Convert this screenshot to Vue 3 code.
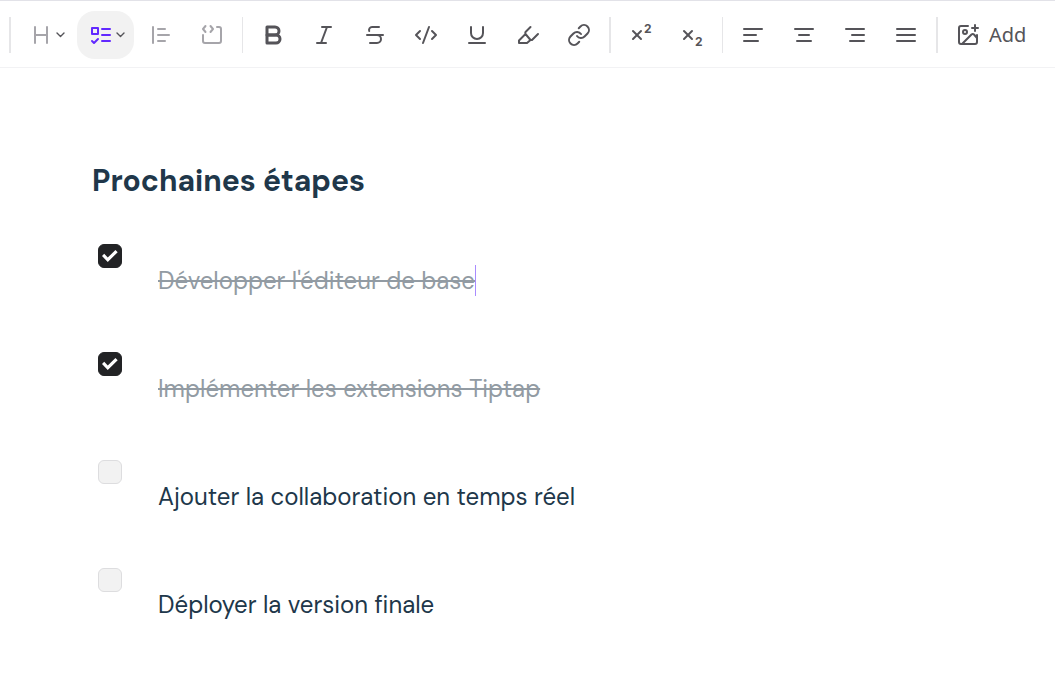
<template>
  <div class="editor">
    <!-- Barre d'outils -->
    <div class="toolbar" role="toolbar" aria-label="Mise en forme">
      <template v-for="(group, g) in groups" :key="g">
        <span class="separator" :class="{ wide: g % 2 === 0 }"></span>
        <div class="group">
          <button
            v-for="tool in group"
            :key="tool.name"
            type="button"
            class="tool"
            :class="{ menu: tool.menu, active: tool.active, disabled: tool.disabled, add: tool.text }"
            :aria-label="tool.name"
          >
            <svg class="icon" viewBox="0 0 24 24" :stroke-width="tool.stroke || 2">
              <path v-for="d in tool.paths" :key="d" :d="d" />
              <text v-if="tool.digitY" class="digit" x="15" :y="tool.digitY">2</text>
            </svg>
            <svg v-if="tool.menu" class="chevron" viewBox="0 0 12 12">
              <path d="M2 4l3.5 3.5L9 4" />
            </svg>
            <span v-if="tool.text" class="tool-text">{{ tool.text }}</span>
          </button>
        </div>
      </template>
    </div>

    <!-- Contenu du document -->
    <main class="content">
      <h2>Prochaines étapes</h2>
      <ul class="tasks">
        <li v-for="(task, i) in tasks" :key="task.label">
          <input :id="'task-' + i" v-model="task.done" type="checkbox" />
          <label :for="'task-' + i" :class="{ done: task.done, caret: i === 0 }">{{ task.label }}</label>
        </li>
      </ul>
    </main>
  </div>
</template>

<script setup>
import { ref } from 'vue'

const groups = [
  [
    { name: 'Titre', menu: true, disabled: true, paths: ['M6 4v16', 'M18 4v16', 'M6 12h12'] },
    { name: 'Liste', menu: true, active: true, paths: ['M3 5h6v6H3z', 'M3 18l2 2 4-4', 'M13 6h8', 'M13 12h8', 'M13 18h8'] },
    { name: 'Citation', disabled: true, paths: ['M4 4v16', 'M9 6h7', 'M9 12h11', 'M9 18h7'] },
    { name: 'Bloc de code', disabled: true, paths: ['M5.5 3L3 6l2.5 3', 'M10.5 3L13 6l-2.5 3', 'M17 4h2a2 2 0 0 1 2 2v12a2 2 0 0 1-2 2H5a2 2 0 0 1-2-2v-6'] }
  ],
  [
    { name: 'Gras', stroke: 3, paths: ['M6 4h8a4 4 0 0 1 0 8H6z', 'M6 12h9a4 4 0 0 1 0 8H6z'] },
    { name: 'Italique', paths: ['M19 4h-9', 'M14 20H5', 'M15 4L9 20'] },
    { name: 'Barré', paths: ['M16 4H9a3 3 0 0 0-2.8 4', 'M14 12a4 4 0 0 1 0 8H7', 'M4 12h16'] },
    { name: 'Code', paths: ['M6 8l-4 4 4 4', 'M18 8l4 4-4 4', 'M15 4L9 20'] },
    { name: 'Souligné', paths: ['M6 4v6a6 6 0 0 0 12 0V4', 'M4 20h16'] },
    { name: 'Surligner', paths: ['M14.5 4L9.5 9a2 2 0 0 0 0 2L3 17.5V20h8l3.5-3-5-6', 'M14.5 17H16l6-6'] },
    { name: 'Lien', paths: ['M10 13a5 5 0 0 0 7.54.54l3-3a5 5 0 0 0-7.07-7.07l-1.72 1.71', 'M14 11a5 5 0 0 0-7.54-.54l-3 3a5 5 0 0 0 7.07 7.07l1.71-1.71'] }
  ],
  [
    { name: 'Exposant', digitY: 10, paths: ['M4 8l8 8', 'M12 8l-8 8'] },
    { name: 'Indice', digitY: 23, paths: ['M4 8l8 8', 'M12 8l-8 8'] }
  ],
  [
    { name: 'Aligner à gauche', paths: ['M3 6h18', 'M3 12h12', 'M3 18h14'] },
    { name: 'Centrer', paths: ['M3 6h18', 'M7 12h10', 'M5 18h14'] },
    { name: 'Aligner à droite', paths: ['M3 6h18', 'M9 12h12', 'M7 18h14'] },
    { name: 'Justifier', paths: ['M3 6h18', 'M3 12h18', 'M3 18h18'] }
  ],
  [
    { name: 'Add', text: 'Add', paths: ['M12 3H5a2 2 0 0 0-2 2v14a2 2 0 0 0 2 2h14a2 2 0 0 0 2-2v-7', 'M19 2v6', 'M16 5h6', 'M11 9a2 2 0 1 1-4 0a2 2 0 1 1 4 0z', 'M6 21l9.5-9.5a2 2 0 0 1 2.5 0L21 15'] }
  ]
]

const tasks = ref([
  { label: "Développer l'éditeur de base", done: true },
  { label: 'Implémenter les extensions Tiptap', done: true },
  { label: 'Ajouter la collaboration en temps réel', done: false },
  { label: 'Déployer la version finale', done: false }
])
</script>

<style>
body {
  background: #fff;
}
</style>

<style scoped>
.editor {
  font-family: 'DM Sans', Inter, 'Liberation Sans', sans-serif;
  font-variant-ligatures: none;
  color: #20374a;
}
.toolbar {
  display: flex;
  align-items: center;
  padding: 10px 0 8px 3px;
  border-top: 1px solid #e2e2e8;
  border-bottom: 1px solid #f2f2f4;
}
.group {
  display: flex;
  gap: 3px;
}
.separator {
  flex: none;
  width: 1px;
  height: 36px;
  margin: 0 6px;
  background: #e6e6e8;
}
.separator.wide {
  width: 2px;
}
.tool {
  display: flex;
  align-items: center;
  justify-content: center;
  width: 48px;
  height: 48px;
  padding: 0;
  border: 0;
  border-radius: 18px;
  background: none;
  color: #555459;
  font-family: 'Noto Sans', sans-serif;
  font-size: 20px;
  cursor: pointer;
}
.tool.menu {
  gap: 2px;
  width: auto;
  padding: 0 7px 0 12px;
}
.tool.add {
  gap: 9px;
  width: auto;
  padding: 0 12px;
}
.tool-text {
  line-height: 26px;
}
.tool.disabled .icon {
  color: #a6a5aa;
}
.tool.active {
  background: #f2f2f2;
}
.tool.active .icon {
  color: #6229ff;
}
.icon {
  width: 24px;
  height: 24px;
  overflow: visible;
}
.chevron {
  width: 12px;
  height: 12px;
  stroke-width: 1.4;
}
.icon,
.chevron {
  flex: none;
  fill: none;
  stroke: currentColor;
  stroke-linecap: round;
  stroke-linejoin: round;
}
.digit {
  fill: currentColor;
  stroke: none;
  font: bold 12px Inter, sans-serif;
}

/* Document */
.content {
  padding: 93px 92px 48px;
}
h2 {
  margin: 0;
  font-size: 30px;
  font-weight: 700;
  line-height: 40px;
}
.tasks {
  display: flex;
  flex-direction: column;
  gap: 48px;
  margin: 0;
  padding: 39px 6px 0;
  list-style: none;
}
.tasks li {
  display: flex;
  align-items: flex-start;
  gap: 36px;
  min-height: 60px;
}
.tasks input {
  appearance: none;
  flex: none;
  display: grid;
  place-items: center;
  width: 24px;
  height: 24px;
  margin: 4px 0 0;
  border: 1px solid #dddddf;
  border-radius: 6px;
  background: #f2f2f2;
}
.tasks input:checked {
  border-color: #222325;
  background: #222325;
}
.tasks input:checked::before {
  content: '';
  width: 16px;
  height: 16px;
  background: #fff;
  clip-path: polygon(0 50%, 14% 36%, 36% 60%, 84% 12%, 98% 26%, 36% 88%);
}
.tasks label {
  margin-top: 25px;
  font-size: 24px;
  line-height: 31px;
}
.tasks label.done {
  color: #929ba3;
  text-decoration: line-through;
}
.tasks label.caret {
  border-right: 1px solid #a98cff;
}
</style>
